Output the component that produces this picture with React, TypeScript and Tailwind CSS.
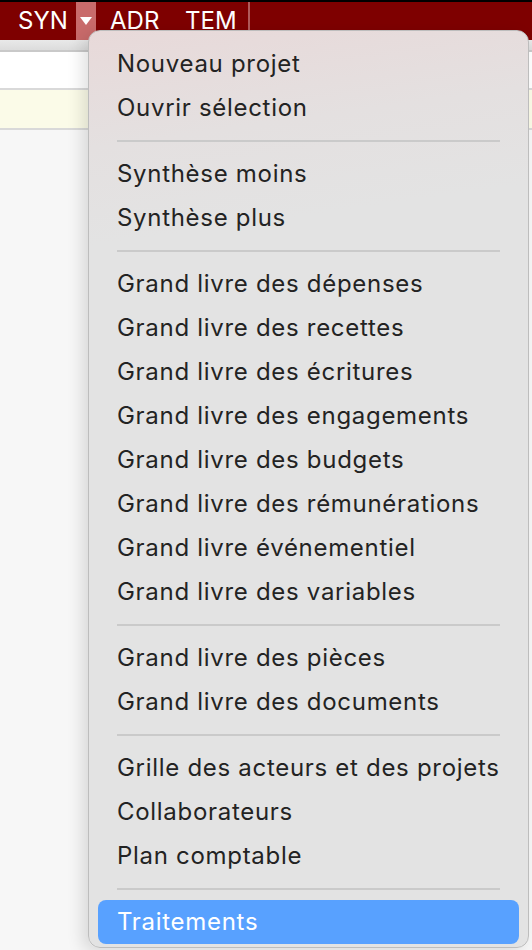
import React from "react";

const groups: string[][] = [
  ["Nouveau projet", "Ouvrir sélection"],
  ["Synthèse moins", "Synthèse plus"],
  [
    "Grand livre des dépenses",
    "Grand livre des recettes",
    "Grand livre des écritures",
    "Grand livre des engagements",
    "Grand livre des budgets",
    "Grand livre des rémunérations",
    "Grand livre événementiel",
    "Grand livre des variables",
  ],
  ["Grand livre des pièces", "Grand livre des documents"],
  ["Grille des acteurs et des projets", "Collaborateurs", "Plan comptable"],
];

export default function App() {
  return (
    <div
      className="relative w-[532px] h-[950px] overflow-hidden bg-[#f7f7f7]"
      style={{ fontFamily: "Inter, 'Noto Sans', sans-serif" }}
    >
      {/* top bar */}
      <div className="h-[2px] bg-black" />
      <div className="h-[38px] bg-[#7e0000] flex items-center">
        <span className="ml-[18px] w-[48px] text-white text-[24px] leading-none">SYN</span>
        <div className="ml-[10px] w-[20px] h-[38px] bg-[#c96b6b] flex items-center justify-center">
          <svg width="12" height="10" viewBox="0 0 12 10">
            <path d="M0 1 L12 1 L6 9 Z" fill="white" />
          </svg>
        </div>
        <span className="ml-[14px] w-[75px] text-white text-[24px] leading-none">ADR</span>
        <span className="w-[63px] text-white text-[24px] leading-none">TEM</span>
        <div className="w-[2px] h-[38px] bg-[#b05a5a]" />
      </div>
      {/* background rows */}
      <div className="h-[10px] bg-gradient-to-b from-[#e9e9e9] to-[#dcdcdc]" />
      <div className="h-[2px] bg-[#c9c9c9]" />
      <div className="h-[38px] bg-white border-b-2 border-[#d9d9d9]" />
      <div className="h-[40px] bg-[#fbfbe8] border-b-2 border-[#d9d9d9]" />

      {/* menu */}
      <div className="absolute left-[88px] top-[30px] w-[441px] h-[918px] rounded-[12px] border border-[#bdbdbd] bg-[linear-gradient(172deg,#e8d9d9_0%,#e4e0e0_12%,#e3e3e3_22%,#e3e3e3_100%)] shadow-[-6px_4px_16px_rgba(0,0,0,0.12)] px-[9px] pt-[11px]">
        {groups.map((g, gi) => (
          <div key={gi}>
            {gi > 0 && (
              <div className="h-[22px] flex items-center px-[19px]">
                <div className="h-[2px] w-full bg-[#cacaca]" />
              </div>
            )}
            {g.map((t) => (
              <div
                key={t}
                className="h-[44px] flex items-center pl-[19px] text-[24px] tracking-[0.7px] text-[#232323] whitespace-nowrap"
              >
                {t}
              </div>
            ))}
          </div>
        ))}
        <div className="h-[22px] flex items-center px-[19px]">
          <div className="h-[2px] w-full bg-[#cacaca]" />
        </div>
        <div className="h-[44px] rounded-[8px] bg-[#58a1ff] flex items-center pl-[19px] text-[24px] tracking-[0.7px] text-white">
          Traitements
        </div>
      </div>
    </div>
  );
}
